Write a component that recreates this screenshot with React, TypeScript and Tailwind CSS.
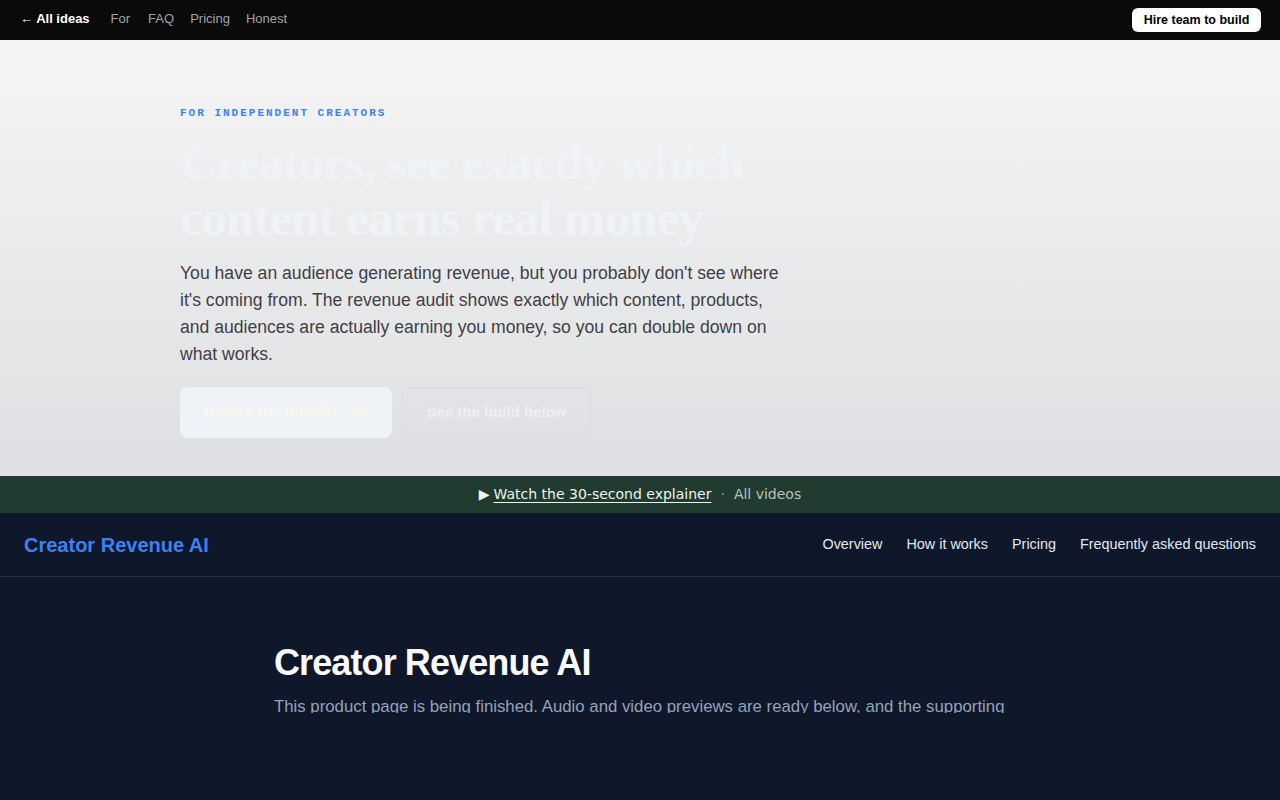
export default function App() {
  return (
    <div className="h-[800px] overflow-hidden bg-[#0f172a] font-['Liberation_Sans',Arial,sans-serif]">
      {/* top bar */}
      <header className="flex h-10 items-center justify-between bg-[#0a0a0a] pl-[20px] pr-[19px]">
        <nav className="flex items-center pb-[2px] text-[13px]">
          <a className="font-bold text-white">← All ideas</a>
          <a className="ml-[21px] text-[#a3a3a3]">For</a>
          <a className="ml-[18px] text-[#a3a3a3]">FAQ</a>
          <a className="ml-[16px] text-[#a3a3a3]">Pricing</a>
          <a className="ml-[16px] text-[#a3a3a3]">Honest</a>
        </nav>
        <button className="h-6 w-[129px] rounded-md bg-white text-[12.5px] font-bold text-black">Hire team to build</button>
      </header>

      {/* hero */}
      <section className="h-[436px] bg-gradient-to-b from-[#f5f5f5] to-[#dedfe2] pl-[180px] pt-[65px]">
        <p className="font-['Liberation_Mono',monospace] text-[11px] font-bold tracking-[2px] text-[#3b82f6]">FOR INDEPENDENT CREATORS</p>
        <h1 className="mt-[12px] max-w-[620px] font-['Liberation_Serif',serif] text-[51px] font-bold leading-[56px] tracking-[-0.02em] text-[#eff2f7]">
          Creators, see exactly which content earns real money
        </h1>
        <p className="mt-[14px] max-w-[610px] text-[17.6px] leading-[1.55] text-[#3f3f46]">
          You have an audience generating revenue, but you probably don't see where it's coming from. The revenue audit shows exactly which content, products, and audiences are actually earning you money, so you can double down on what works.
        </p>
        <div className="mt-[18px] flex gap-[10px]">
          <button className="h-[51px] w-[212px] rounded-lg bg-[#eff2f7] text-[15px] font-bold text-[#fbf8ee]">Unlock the dossier · $5</button>
          <button className="h-[51px] w-[189px] rounded-lg border border-[#dadbde] text-[15px] font-bold text-[#eef0f5]">See the build below</button>
        </div>
      </section>

      {/* video strip */}
      <div className="flex h-[37px] items-center justify-center bg-[#213b30] font-['DejaVu_Sans',sans-serif] text-[14px]">
        <span className="text-[#f1f5f2]">▶</span>
        <a className="ml-[4px] text-[#eef3ef] underline underline-offset-[3px]">Watch the 30-second explainer</a>
        <span className="mx-[9px] text-[#8fa398]">·</span>
        <a className="text-[#b8c3bc]">All videos</a>
      </div>

      {/* product nav */}
      <div className="flex h-16 items-center justify-between border-b border-[#252e40] px-6">
        <span className="text-[20px] font-bold text-[#3b82f6]">Creator Revenue AI</span>
        <nav className="flex gap-6 text-[14.4px] text-[#e2e8f0]">
          <a>Overview</a>
          <a>How it works</a>
          <a>Pricing</a>
          <a>Frequently asked questions</a>
        </nav>
      </div>

      {/* product intro */}
      <main className="mx-auto h-[136px] max-w-[732px] overflow-hidden pt-[66px]">
        <h2 className="text-[36px] font-bold leading-[40px] tracking-[-0.025em] text-[#f8fafc]">Creator Revenue AI</h2>
        <p className="mt-[10px] text-[16.8px] leading-[28px] text-[#94a3b8]">
          This product page is being finished. Audio and video previews are ready below, and the supporting material is on its way.
        </p>
      </main>
    </div>
  );
}
